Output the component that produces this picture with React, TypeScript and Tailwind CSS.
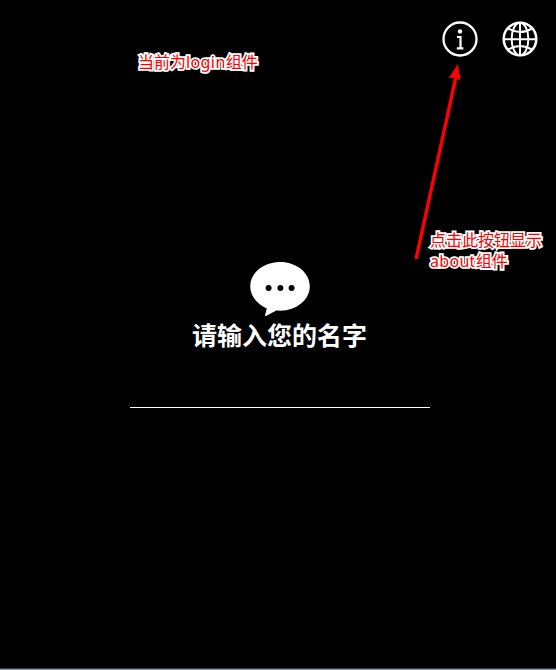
import React from 'react';

function InfoIcon() {
  return (
    <svg width="36" height="36" viewBox="0 0 36 36" fill="none" stroke="white">
      <circle cx="18" cy="18" r="16.5" strokeWidth="2.3" />
      <circle cx="18" cy="10.4" r="2.2" fill="white" stroke="none" />
      <path d="M15 16h3.5v11.3M14.8 27.3h6.6" strokeWidth="2.2" />
    </svg>
  );
}

function GlobeIcon() {
  return (
    <svg width="36" height="36" viewBox="0 0 36 36" fill="none" stroke="white" strokeWidth="2">
      <circle cx="18" cy="18" r="16.3" strokeWidth="2.5" />
      <ellipse cx="18" cy="18" rx="8.4" ry="16.3" />
      <path d="M18 1.5v33M1.5 18.3h33M5.8 7.3Q18 14.8 30.2 7.3M5.8 28.7Q18 21.2 30.2 28.7" />
    </svg>
  );
}

function ChatIcon() {
  return (
    <svg width="60" height="55" viewBox="0 0 60 55" className="block">
      <path
        d="M30 0C46.6 0 59.8 10.8 59.8 24.3S46.6 48.7 30 48.7C28.7 48.7 27.5 48.6 26.3 48.6L16 54Q15 54.4 15.1 53L16.8 46.4C7 42.3.2 34 .2 24.3.2 10.8 13.4 0 30 0Z"
        fill="white"
      />
      <circle cx="18.6" cy="26" r="3" />
      <circle cx="30.4" cy="26" r="3" />
      <circle cx="41.6" cy="26" r="3" />
    </svg>
  );
}

function Note({ className, children }: { className: string; children: React.ReactNode }) {
  return (
    <p
      className={`absolute whitespace-nowrap text-[16px] leading-[21px] text-[#ff0000] [-webkit-text-stroke:3.6px_white] [paint-order:stroke_fill] [stroke-linejoin:round] ${className}`}
    >
      {children}
    </p>
  );
}

export default function App() {
  return (
    <main className="relative flex h-[670px] w-[556px] flex-col overflow-hidden border-b border-[#8e9bae] bg-black font-['Noto_Sans','Noto_Sans_CJK_SC',sans-serif] text-white">
      <header className="flex justify-end gap-6 pt-[21px] pr-[18px]">
        <button aria-label="about" className="block size-9">
          <InfoIcon />
        </button>
        <button aria-label="language" className="block size-9">
          <GlobeIcon />
        </button>
      </header>
      <section className="flex grow flex-col items-center pt-[205px] pl-1">
        <ChatIcon />
        <h1 className="-mt-px mr-px font-['Noto_Sans_CJK_SC',sans-serif] text-[25px] leading-9 font-bold">请输入您的名字</h1>
        <input className="mt-[30px] h-[26px] w-[300px] border-b border-white bg-transparent text-center outline-none" />
      </section>
      <div className="h-px bg-[#343a43]" />

      <Note className="top-[52px] left-[138px]">
        当前为<span className="tracking-[0.4px]">login</span>组件
      </Note>
      <Note className="top-[230px] left-[430px]">
        点击此按钮显示
        <br />
        <span className="tracking-[0.3px]">about</span>组件
      </Note>
      <svg className="absolute top-[60px] left-[410px]" width="60" height="205" viewBox="0 0 60 205" fill="#ff0000">
        <path d="M4.4 198.5 44 17.5 47.4 18 7.7 199.3Z" />
        <path d="M48 4 50.6 20.8 45.7 17.5 38.8 18Z" />
      </svg>
    </main>
  );
}
